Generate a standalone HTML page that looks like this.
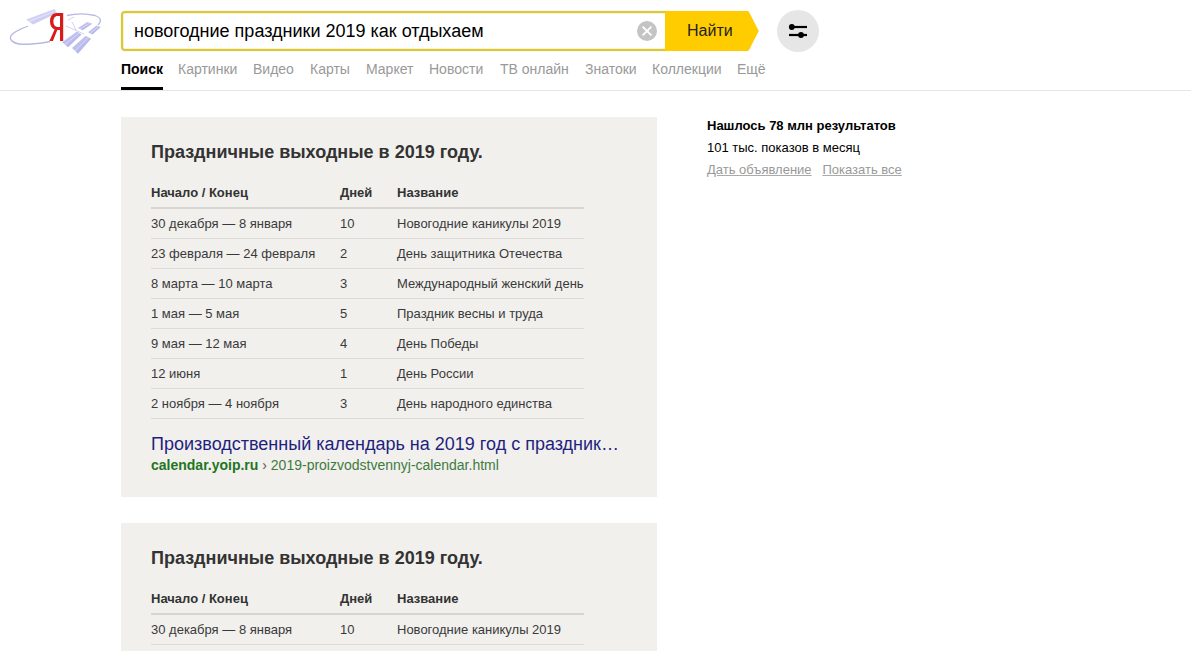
<!DOCTYPE html>
<html><head><meta charset="utf-8">
<style>
*{margin:0;padding:0;box-sizing:border-box}
html,body{width:1191px;height:651px;overflow:hidden;background:#fff;font-family:"Liberation Sans",sans-serif;color:#333}
.abs{position:absolute}
#logo{left:0;top:0;width:110px;height:60px}
#search{left:121px;top:11px;width:550px;height:40px;border:2px solid #d4c45c;border-radius:4px;background:#fff;box-shadow:0 0 0 1px #fffbd0,inset 0 0 0 1px #fff7a8}
#search .q{position:absolute;left:11px;top:8px;font-size:18px;color:#000;white-space:nowrap}
#clear{left:637px;top:21px;width:20px;height:20px}
#btn{left:665px;top:11px;width:95px;height:40px}
#btn span{position:absolute;left:22px;top:11px;font-size:16px;color:#222}
#settings{left:777px;top:10px;width:42px;height:42px;border-radius:50%;background:#e6e6e6}
.nav{top:61px;font-size:14px;color:#999;white-space:nowrap}
.nav.act{color:#000;font-weight:bold}
#uline{left:121px;top:87px;width:42px;height:3px;background:#000}
#hline{left:0;top:90px;width:1191px;height:1px;background:#e6e6e6}
.card{left:121px;width:536px;background:#f1f0ed}
.card h2{position:absolute;left:30px;font-size:18px;font-weight:bold;color:#333;white-space:nowrap}
.tbl{position:absolute;left:30px;width:433px}
.row{position:relative;height:30px;border-bottom:1px solid #dcdbd8;font-size:13px;white-space:nowrap;color:#3a3a3a}
.row.hd{height:32px;border-bottom:2px solid #d6d5d2;font-weight:bold;color:#333}
.row span{position:absolute;top:7px}
.row.hd span{top:8px}
.c1{left:0}.c2{left:189px}.c3{left:246px}
.link{position:absolute;left:30px;font-size:18px;color:#1f1f80;white-space:nowrap}
.url{position:absolute;left:30px;font-size:14px;color:#3f7a3f;white-space:nowrap}
.url b{color:#1f751f}
.url i{font-style:normal;color:#555}
.rt{left:707px;font-size:13px;color:#000;white-space:nowrap}
.rl{color:#999;text-decoration:underline;text-decoration-color:#aaa}
</style></head><body>
<div id="logo" class="abs">
<svg width="110" height="60" viewBox="0 0 110 60">
<defs><linearGradient id="pg" x1="0" y1="0" x2="1" y2="1"><stop offset="0" stop-color="#d0d0f4"/><stop offset="1" stop-color="#a8a8ea"/></linearGradient></defs>
<path d="M28 26 C 18 30, 9.5 34, 10.5 38.5 C 11.5 43, 20 45, 32 44 C 40 43.5, 46 42.5, 50 41.5" fill="none" stroke="#b8b8e4" stroke-width="1.3"/>
<path d="M67 15.5 C 74 14, 86 13.5, 95 15.5 C 101 17.5, 102 21, 98 25" fill="none" stroke="#b8b8e4" stroke-width="1.3"/>
<path d="M26 19.5 L54.5 9 L57 13 L33 24.5 Z" fill="url(#pg)" opacity="0.7"/><path d="M29 21.5 L55.5 11" stroke="#eeeefc" stroke-width="0.7"/>
<path d="M62 42.2 L77 31.5 L81.5 34.6 L68 47.2 Z" fill="url(#pg)"/>
<path d="M72 48 L85.7 35.7 L91.1 38.8 L78 53.8 Z" fill="url(#pg)"/>
<path d="M78 28 L87.3 21.9 L92.3 23.8 L82.6 30.3 Z" fill="url(#pg)"/>
<path d="M88 32.3 L96.5 25.4 L100.7 26.9 L92.6 34.6 Z" fill="url(#pg)"/>
<path d="M65 44.7 L79.3 33 M75 51 L88.4 37.3 M80.3 29 L89.8 22.9 M90.3 33.4 L98.6 26.2" stroke="#e4e4fa" stroke-width="0.7"/>
<path d="M68 20 L74 17 M66 26 L84 34 M72 22 L76 30" stroke="#c8c8e8" stroke-width="0.8"/>
<path d="M49.4 41 L52.9 41 L57.3 30 L60 30 L60 41 L63.2 41 L63.2 13 L57.2 13 C 52.6 13, 50 16, 50 21.5 C 50 25.3, 51.8 28.3, 54.6 29.5 Z M60 16 L57.4 16 C 54.9 16, 53.4 18.3, 53.4 21.6 C 53.4 25, 55 27.1, 57.6 27.1 L60 27.1 Z" fill="#d81c1c" fill-rule="evenodd"/>
</svg>
</div>
<div id="search" class="abs"><div class="q">новогодние праздники 2019 как отдыхаем</div></div>
<div id="clear" class="abs"><svg width="20" height="20" viewBox="0 0 20 20"><circle cx="10" cy="10" r="10" fill="#c4c4c4"/><path d="M5.6 5.6 L14.4 14.4 M14.4 5.6 L5.6 14.4" stroke="#fff" stroke-width="1.9"/></svg></div>
<div id="btn" class="abs"><svg width="95" height="40" viewBox="0 0 95 40"><path d="M0 0 H82.5 Q83.5 0 84 1 L93.5 19.5 Q93.8 20 93.5 20.5 L84 39 Q83.5 40 82.5 40 H0 Z" fill="#ffcc00"/></svg><span>Найти</span></div>
<div id="settings" class="abs"><svg width="42" height="42" viewBox="0 0 42 42"><path d="M14.5 17 H30" stroke="#000" stroke-width="2.2"/><circle cx="14.8" cy="17" r="2.9" fill="#000"/><path d="M12 25 H30" stroke="#000" stroke-width="2.2"/><circle cx="24" cy="25" r="2.9" fill="#000"/></svg></div>
<div class="abs nav act" style="left:121px">Поиск</div>
<div class="abs nav" style="left:178px">Картинки</div>
<div class="abs nav" style="left:253px">Видео</div>
<div class="abs nav" style="left:310px">Карты</div>
<div class="abs nav" style="left:366px">Маркет</div>
<div class="abs nav" style="left:429px">Новости</div>
<div class="abs nav" style="left:500px">ТВ онлайн</div>
<div class="abs nav" style="left:585px">Знатоки</div>
<div class="abs nav" style="left:652px">Коллекции</div>
<div class="abs nav" style="left:737px">Ещё</div>
<div id="uline" class="abs"></div>
<div id="hline" class="abs"></div>

<div class="abs card" style="top:117px;height:380px">
<h2 style="top:25px">Праздничные выходные в 2019 году.</h2>
<div class="tbl" style="top:60px">
<div class="row hd"><span class="c1">Начало / Конец</span><span class="c2">Дней</span><span class="c3">Название</span></div>
<div class="row"><span class="c1">30 декабря — 8 января</span><span class="c2">10</span><span class="c3">Новогодние каникулы 2019</span></div>
<div class="row"><span class="c1">23 февраля — 24 февраля</span><span class="c2">2</span><span class="c3">День защитника Отечества</span></div>
<div class="row"><span class="c1">8 марта — 10 марта</span><span class="c2">3</span><span class="c3">Международный женский день</span></div>
<div class="row"><span class="c1">1 мая — 5 мая</span><span class="c2">5</span><span class="c3">Праздник весны и труда</span></div>
<div class="row"><span class="c1">9 мая — 12 мая</span><span class="c2">4</span><span class="c3">День Победы</span></div>
<div class="row"><span class="c1">12 июня</span><span class="c2">1</span><span class="c3">День России</span></div>
<div class="row"><span class="c1">2 ноября — 4 ноября</span><span class="c2">3</span><span class="c3">День народного единства</span></div>
</div>
<div class="link" style="top:317px">Производственный календарь на 2019 год с праздник…</div>
<div class="url" style="top:340px"><b>calendar.yoip.ru</b> <i>›</i> 2019-proizvodstvennyj-calendar.html</div>
</div>

<div class="abs card" style="top:523px;height:140px">
<h2 style="top:25px">Праздничные выходные в 2019 году.</h2>
<div class="tbl" style="top:60px">
<div class="row hd"><span class="c1">Начало / Конец</span><span class="c2">Дней</span><span class="c3">Название</span></div>
<div class="row"><span class="c1">30 декабря — 8 января</span><span class="c2">10</span><span class="c3">Новогодние каникулы 2019</span></div>
</div>
</div>

<div class="abs rt" style="top:118px;font-weight:bold">Нашлось 78 млн результатов</div>
<div class="abs rt" style="top:140px">101 тыс. показов в месяц</div>
<div class="abs rt" style="top:162px"><span class="rl">Дать объявление</span>&nbsp;&nbsp;&nbsp;<span class="rl">Показать все</span></div>
</body></html>
